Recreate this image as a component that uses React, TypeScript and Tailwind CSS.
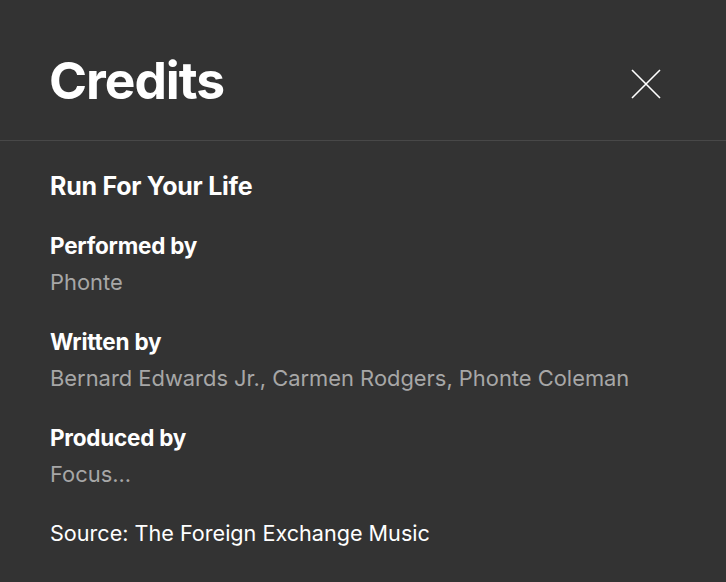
import { useState } from 'react';

const credits = [
  { role: 'Performed by', names: 'Phonte' },
  { role: 'Written by', names: 'Bernard Edwards Jr., Carmen Rodgers, Phonte Coleman' },
  { role: 'Produced by', names: 'Focus...' },
];

function CloseIcon() {
  return (
    <svg width="32" height="32" viewBox="0 0 32 32" fill="none">
      <path d="M2 2L30 30M30 2L2 30" stroke="white" strokeWidth="1.6" />
    </svg>
  );
}

export default function App() {
  const [open, setOpen] = useState(true);

  return (
    <div
      className="w-[726px] h-[582px] bg-[#333333] text-white overflow-hidden"
      style={{ fontFamily: 'Inter, "Liberation Sans", sans-serif' }}
    >
      {/* Header */}
      <div className="h-[141px] border-b border-[#484848] flex items-start justify-between pl-[49px] pr-[64px]">
        <h1 className="text-[51.5px] font-bold tracking-[-0.02em] leading-none mt-[55px]">Credits</h1>
        <button onClick={() => setOpen(!open)} className="mt-[68px]">
          <CloseIcon />
        </button>
      </div>

      {/* Body */}
      <div className="px-[50px] pt-[27px]">
        <h2 className="text-[25px] font-bold leading-[36px] tracking-[-0.01em]">Run For Your Life</h2>
        <div className="mt-[24px] flex flex-col gap-[24px]">
          {credits.map((c) => (
            <div key={c.role} className="leading-[36px]">
              <div className="text-[22.5px] font-bold tracking-[-0.01em]">{c.role}</div>
              <div className="text-[21.9px] text-[#a7a7a7]">{c.names}</div>
            </div>
          ))}
          <p className="text-[21.6px] leading-[36px] mt-[-1px]">Source: The Foreign Exchange Music</p>
        </div>
      </div>
    </div>
  );
}
